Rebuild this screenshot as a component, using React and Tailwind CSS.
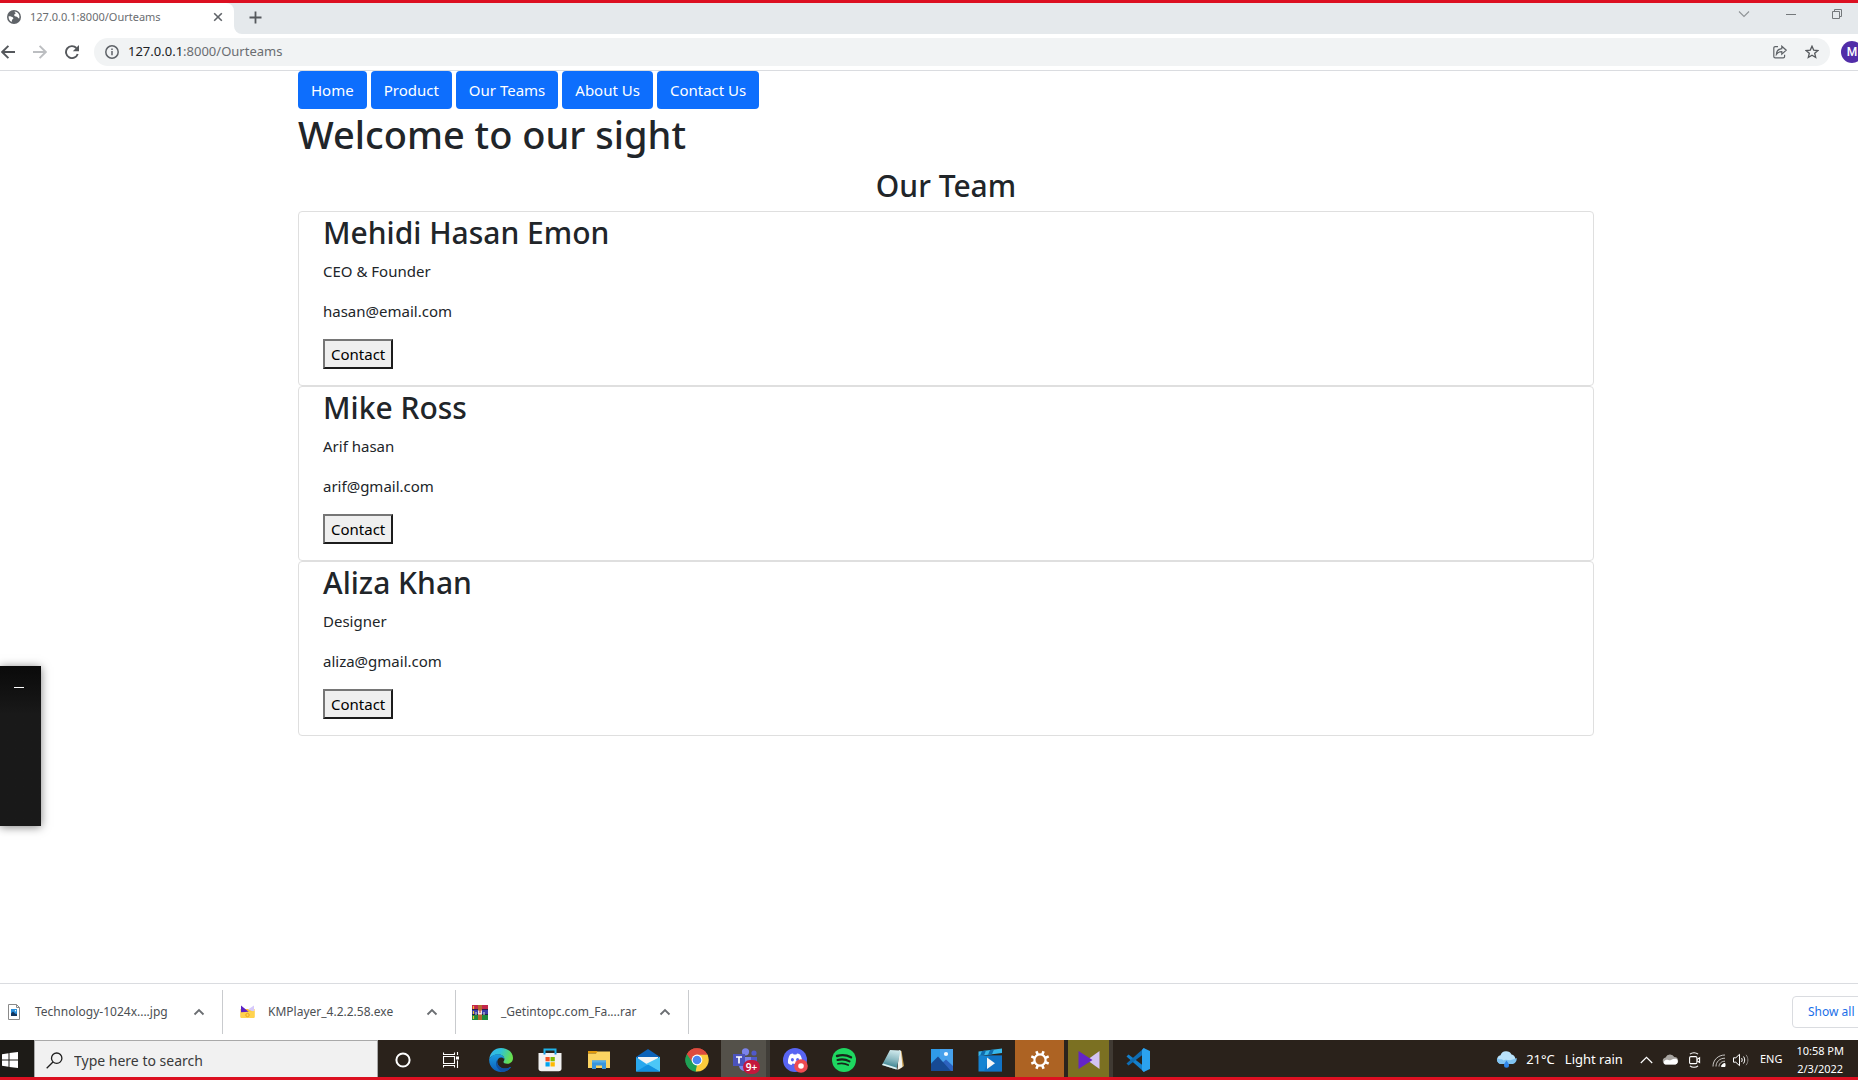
import React from "react";

const NAV = ["Home", "Product", "Our Teams", "About Us", "Contact Us"];

const TEAM = [
  { name: "Mehidi Hasan Emon", role: "CEO & Founder", email: "hasan@email.com" },
  { name: "Mike Ross", role: "Arif hasan", email: "arif@gmail.com" },
  { name: "Aliza Khan", role: "Designer", email: "aliza@gmail.com" },
];

function Globe() {
  return (
    <svg width="14" height="14" viewBox="0 0 14 14" className="shrink-0">
      <circle cx="7" cy="7" r="7" fill="#5f6368" />
      <path d="M1.6 6.2C3.2 6 5.2 6.6 6 7.6c.8 1 .2 1.6-.6 1.8-.6.2-.4 1.6-.8 2.6C2.6 11 1.4 8.800 1.600 6.200z" fill="#fff" />
      <path d="M7.600 1.600C9 1.600 11 2.600 11.800 4.200 12.600 5.600 12.500 7.400 12.100 8.600 11 8.300 11 7 9.900 6.700 8.600 6.400 7 6 7.200 4.900 7.400 3.900 8.400 4 8.600 3.300 8.700 2.700 7.200 2.500 7.600 1.600z" fill="#fff" />
    </svg>
  );
}

function Caret() {
  return (
    <svg width="12" height="8" viewBox="0 0 12 8" fill="none" stroke="#6b6e72" strokeWidth="1.8">
      <path d="M1.500 6.500 6 2l4.500 4.500" />
    </svg>
  );
}

function TabStrip() {
  return (
    <div className="flex h-[31px] bg-[#e5e9ec]">
      <div className="flex w-[234px] shrink-0 items-center rounded-tr-lg bg-white pb-[3px] pl-[7px] pr-[11px]">
        <Globe />
        <span className="ml-[9px] flex-1 text-[11px] text-[#6a6d71]">127.0.0.1:8000/Ourteams</span>
        <button aria-label="Close tab" className="flex">
          <svg width="10" height="10" viewBox="0 0 10 10" stroke="#5f6368" strokeWidth="1.6">
            <path d="M1.200 1.200l7.600 7.600M8.800 1.200 1.200 8.800" />
          </svg>
        </button>
      </div>
      <svg width="8" height="8" viewBox="0 0 8 8" className="self-end" fill="#fff">
        <path d="M0 0a8 8 0 0 0 8 8H0z" />
      </svg>
      <button aria-label="New tab" className="ml-[7px] flex items-center self-stretch pb-[3px]">
        <svg width="13" height="13" viewBox="0 0 13 13" stroke="#55585c" strokeWidth="1.800">
          <path d="M6.500 0.500v12M0.500 6.500h12" />
        </svg>
      </button>
      <div className="ml-auto flex items-start gap-[36px] pr-4 pt-[6px]">
        <button aria-label="Search tabs" className="flex">
          <svg width="12" height="10" viewBox="0 0 12 10" fill="none" stroke="#8f9396" strokeWidth="1.100">
            <path d="M1 2.500l5 5 5-5" />
          </svg>
        </button>
        <button aria-label="Minimize" className="flex">
          <svg width="10" height="10" viewBox="0 0 10 10" stroke="#74787b" strokeWidth="1">
            <path d="M0 5.500h10" />
          </svg>
        </button>
        <button aria-label="Restore" className="flex">
          <svg width="10" height="10" viewBox="0 0 10 10" fill="none" stroke="#74787b" strokeWidth="1">
            <path d="M0.500 2.500h7v7h-7zM2.500 2.500v-2h7v7h-2" />
          </svg>
        </button>
      </div>
    </div>
  );
}

function Toolbar() {
  return (
    <div className="flex h-[37px] items-center overflow-hidden border-b border-[#dadce0] bg-white">
      <button aria-label="Back" className="ml-px flex">
        <svg width="14" height="14" viewBox="0 0 14 14" fill="none" stroke="#55585c" strokeWidth="1.900">
          <path d="M14 7H1.500M7.400 0.800 1.200 7l6.200 6.200" />
        </svg>
      </button>
      <button aria-label="Forward" className="ml-[18px] flex">
        <svg width="14" height="14" viewBox="0 0 14 14" fill="none" stroke="#bcbec1" strokeWidth="1.900">
          <path d="M0 7h12.500M6.600 0.800 12.800 7l-6.200 6.200" />
        </svg>
      </button>
      <button aria-label="Reload" className="ml-[18px] flex">
        <svg width="14" height="14" viewBox="0 0 14 14">
          <path d="M12.700 9A6 6 0 1 1 11.400 3" fill="none" stroke="#55585c" strokeWidth="1.900" />
          <path d="M14 0v6.200H7.800z" fill="#55585c" />
        </svg>
      </button>
      <div className="ml-[15px] flex h-7 flex-1 items-center rounded-full bg-[#f1f3f4] pl-[11px] pr-[11px]">
        <svg width="14" height="14" viewBox="0 0 14 14" fill="none" stroke="#5f6368" strokeWidth="1.500">
          <circle cx="7" cy="7" r="6.200" />
          <path d="M7 6v4.300M7 3.400v1.500" />
        </svg>
        <div className="ml-[9px] flex-1 text-[13px] text-[#6a6d71]">
          <span className="text-[#202124]">127.0.0.1</span>:8000/Ourteams
        </div>
        <button aria-label="Share" className="flex">
          <svg width="14" height="14" viewBox="0 0 14 14" fill="none" stroke="#5f6368" strokeWidth="1.200">
            <path d="M5 1.600H2.200c-.8 0-1.400.6-1.400 1.400v8.400c0 .8.600 1.400 1.400 1.400h8c.8 0 1.400-.6 1.400-1.400V9.800" />
            <path d="M3.400 9.400C3.600 6.200 5.400 4 8.800 3.600V1.200l4.400 4-4.400 3.900V6.600C6.400 6.600 4.600 7.600 3.400 9.400z" />
          </svg>
        </button>
        <button aria-label="Bookmark" className="ml-[18px] flex">
          <svg width="14" height="14" viewBox="0 0 14 14" fill="none" stroke="#55585c" strokeWidth="1.300">
            <path d="M7 1.200l1.700 3.900 4.200.4-3.200 2.800 1 4.200L7 10.300l-3.700 2.200 1-4.200L1.100 5.500l4.200-.4z" />
          </svg>
        </button>
      </div>
      <div className="w-[28px] shrink-0 overflow-hidden pl-[11px]">
        <button className="flex h-[22px] w-[22px] items-center justify-center rounded-full bg-[#512da8] font-[Roboto] text-[12px] font-medium text-white">
          M
        </button>
      </div>
    </div>
  );
}

function Page() {
  return (
    <main className="flex-1 bg-white pl-[34px] text-[15px] text-[#212529]">
      <div className="mx-auto w-full max-w-[1320px] px-3">
        <nav className="flex gap-1">
          {NAV.map((label) => (
            <a key={label} href="#" className="rounded bg-[#0d6efd] px-[13px] py-[7px] leading-6 text-white">
              {label}
            </a>
          ))}
        </nav>
        <h1 className="mb-[6px] text-[38px] font-medium leading-[50px]">Welcome to our sight</h1>
        <h2 className="mb-1 text-center text-[30px] font-medium leading-[42px]">Our Team</h2>
        {TEAM.map((m) => (
          <section key={m.name} className="rounded border border-[#dfdfdf] px-6 pb-4">
            <h2 className="mb-[5px] text-[30px] font-medium leading-[42px]">{m.name}</h2>
            <p className="mb-4 leading-6">{m.role}</p>
            <p className="mb-4 leading-6">{m.email}</p>
            <button className="block border-2 border-b-[#1c1c1c] border-l-[#767676] border-r-[#1c1c1c] border-t-[#767676] bg-[#efefef] px-[6px] py-px leading-6 text-black">
              Contact
            </button>
          </section>
        ))}
      </div>
    </main>
  );
}

function JpgIcon() {
  return (
    <svg width="14" height="16" viewBox="0 0 14 16">
      <path d="M1.500 0.500h8l3 3v12h-11z" fill="#fff" stroke="#8a8a8a" />
      <path d="M9.500 0.500v3h3" fill="none" stroke="#8a8a8a" />
      <path d="M4 5h6v7H4z" fill="#2a8fdb" />
      <path d="M4 12V9.500L6 7.500l2.500 2.500 .5-.5L10 10.500V12z" fill="#12355f" />
      <circle cx="8.500" cy="6.800" r="0.700" fill="#fff" />
    </svg>
  );
}

function KmIcon() {
  return (
    <svg width="15" height="14" viewBox="0 0 15 14">
      <path d="M0.500 4h14v7.500c0 1-.5 1.500-1.500 1.500H2c-1 0-1.500-.5-1.500-1.500z" fill="#fbc531" />
      <path d="M1 0.500v7h8.500z" fill="#5b21c4" />
      <path d="M14 0.500v6.500l-6-2.500z" fill="#d6c9fa" />
      <path d="M0.500 7.500 14.500 6v5.500c0 1-.5 1.500-1.500 1.500H2c-1 0-1.500-.5-1.500-1.500z" fill="#ffd34f" />
      <circle cx="7.500" cy="10" r="1.700" fill="none" stroke="#eda51f" />
    </svg>
  );
}

function RarIcon() {
  return (
    <svg width="16" height="15" viewBox="0 0 16 15">
      <path d="M0 0h16v5H0z" fill="#c2274b" />
      <path d="M0 5h16v5H0z" fill="#3b3fa8" />
      <path d="M0 10h16v5H0z" fill="#1f8a3b" />
      <path d="M0 4.500h16M0 9.500h16" stroke="#26204a" />
      <path d="M1.500 1v3M1.500 6v3M1.500 11v3" stroke="#f4c22c" strokeWidth="1.200" />
      <path d="M6 0h4v15H6z" fill="#b4672f" />
      <path d="M6 5.500h4v4H6z" fill="#f2e6df" />
      <path d="M8 5v3" stroke="#b22" />
      <path d="M4 7v3M12 7v3" stroke="#ddd" />
    </svg>
  );
}

const DOWNLOADS = [
  { Icon: JpgIcon, name: "Technology-1024x....jpg" },
  { Icon: KmIcon, name: "KMPlayer_4.2.2.58.exe" },
  { Icon: RarIcon, name: "_Getintopc.com_Fa....rar" },
];

function DownloadBar() {
  return (
    <div className="flex h-[57px] items-center overflow-hidden border-t border-[#dadce0] bg-white text-[12px] text-[#4c4f53]">
      <div className="-ml-[10px] flex">
        {DOWNLOADS.map(({ Icon, name }) => (
          <div key={name} className="flex h-11 w-[233px] items-center border-r border-[#c9cbce] pl-4 pr-[17px]">
            <span className="flex w-4 justify-center">
              <Icon />
            </span>
            <span className="ml-[13px] flex-1">{name}</span>
            <button aria-label={"Options for " + name} className="flex">
              <Caret />
            </button>
          </div>
        ))}
      </div>
      <div className="ml-auto w-[66px] overflow-hidden">
        <button className="h-8 w-20 rounded border border-[#dadce0] pl-[15px] text-left text-[#1a6fe8]">Show all</button>
      </div>
    </div>
  );
}

const APPS = [
  {
    name: "Cortana",
    icon: (
      <svg width="16" height="16" viewBox="0 0 16 16">
        <circle cx="8" cy="8" r="6.600" fill="none" stroke="#fff" strokeWidth="2" />
      </svg>
    ),
  },
  {
    name: "Task View",
    icon: (
      <svg width="17" height="16" viewBox="0 0 17 16" fill="none" stroke="#fff" strokeWidth="1.100">
        <path d="M0.500 4.500h11v7H0.500zM0.500 0.500v2h11v-2M0.500 15.500v-2h11v2M14.500 0v3M14.500 8.500V16" />
        <path d="M13 4.500h3v3h-3z" fill="#fff" stroke="none" />
      </svg>
    ),
  },
  {
    name: "Edge",
    icon: (
      <svg width="24" height="24" viewBox="0 0 24 24">
        <defs>
          <linearGradient id="edgeA" x1="0" y1="0" x2="1" y2="0.300">
            <stop offset="0" stopColor="#35b6f1" />
            <stop offset="0.500" stopColor="#2fc2d8" />
            <stop offset="1" stopColor="#66e04f" />
          </linearGradient>
          <linearGradient id="edgeB" x1="0" y1="0" x2="0" y2="1">
            <stop offset="0" stopColor="#1b9de2" />
            <stop offset="1" stopColor="#0d5db8" />
          </linearGradient>
        </defs>
        <path d="M0.300 11C1 4.500 5.800 0 12 0c6.800 0 12 4.500 12 10 0 3.500-2.600 5.800-5.800 5.800-2.400 0-3.800-.9-3.800-1.700 0-.7 1-1.200 1-3 0-2.600-2.600-4.600-6.200-4.600C5 6.500 1.800 8.200.3 11z" fill="url(#edgeA)" />
        <path d="M0.200 11C1.800 8 5 6.300 9 6.300c3.800 0 6.400 2.200 6.400 4.700-.8-1-2-1.600-3.200-1.600-2.400 0-4 2-4 4.300 0 3.600 3.400 6.800 7.600 6.800 2.200 0 4-.6 5.600-1.500.4-.2.700.2.400.6C19.600 22.400 16 24 12 24 5.300 24-.4 18.500.2 11z" fill="url(#edgeB)" />
        <path d="M8.500 11.500c-1.500 5.200 2.300 9.300 7.600 9 2 0 3.700-.6 5.300-1.500.4-.2.700.2.400.6-2 2.800-5.200 4.300-8.600 4.400-5.500-2.500-8-8.500-4.700-12.500z" fill="#0f4fa3" />
      </svg>
    ),
  },
  {
    name: "Microsoft Store",
    icon: (
      <svg width="24" height="24" viewBox="0 0 24 24">
        <path d="M6.500 6V1.500h11V6" fill="none" stroke="#1fb3ea" strokeWidth="2" />
        <path d="M0.500 5h23v15.500c0 1.700-1 2.800-2.800 2.800H3.300c-1.800 0-2.800-1.100-2.800-2.800z" fill="#f2f2f2" />
        <path d="M5.500 5h2v1.500h-2zM16.500 5h2v1.500h-2z" fill="#1490df" />
        <path d="M7.500 9h4.200v4.300H7.500z" fill="#f25022" />
        <path d="M12.500 9h4.300v4.300h-4.300z" fill="#7fba00" />
        <path d="M7.500 14.200h4.200v4.300H7.500z" fill="#00a4ef" />
        <path d="M12.500 14.200h4.300v4.300h-4.300z" fill="#ffb900" />
      </svg>
    ),
  },
  {
    name: "File Explorer",
    icon: (
      <svg width="22" height="20" viewBox="0 0 22 20">
        <path d="M0 1h9l2 2.500H0z" fill="#e29a0c" />
        <path d="M9.500 1.500H22V18H0V3.500h8z" fill="#fcd462" />
        <path d="M4 19V10.500h14V19h-4v-3.500H8V19z" fill="#3a96dd" />
        <path d="M4 10.500h14v2H4z" fill="#56aee8" />
      </svg>
    ),
  },
  {
    name: "Mail",
    icon: (
      <svg width="24" height="23" viewBox="0 0 24 23">
        <path d="M0 8 12 0l12 8v4H0z" fill="#0c62b8" />
        <path d="M2 8h20v8H2z" fill="#f4f4f4" />
        <path d="M0 8l12 8 12-8v14.500H0z" fill="#2aa9ee" />
        <path d="M24 8v14.500L10 15z" fill="#4cc7f7" />
        <path d="M0 22.500 12 15.500l12 7z" fill="#1390df" />
      </svg>
    ),
  },
  {
    name: "Chrome",
    icon: (
      <svg width="24" height="24" viewBox="0 0 24 24">
        <path d="M12 12 1.900 6.200A11.600 11.600 0 0 1 22.100 6.200z" fill="#dd4b3e" />
        <path d="M12 12 22.100 6.200A11.600 11.600 0 0 1 12 23.600z" fill="#fccb3b" />
        <path d="M12 12v11.600A11.600 11.600 0 0 1 1.900 6.200z" fill="#1fa055" />
        <path d="M12 6.600h10.300l.6 1.700L16.600 14.800 12 23.600l-1.400-.1z" fill="#fccb3b" />
        <path d="M1.900 6.200 7.400 14.700 12 17.300l-1.500 6.200C4 22.500.5 17 .5 12c0-2 .5-4 1.400-5.800z" fill="#1fa055" />
        <path d="M1.900 6.200 6.900 13.500 7 9l5-2.400h10.300A11.600 11.600 0 0 0 1.900 6.200z" fill="#dd4b3e" />
        <circle cx="12" cy="12" r="5.400" fill="#fff" />
        <circle cx="12" cy="12" r="4.300" fill="#4a86f0" />
      </svg>
    ),
  },
  {
    name: "Teams",
    cell: "bg-[#54514a] border-r-4 border-[#403d38] pl-1",
    icon: (
      <span className="relative block">
        <svg width="25" height="24" viewBox="0 0 25 24">
          <circle cx="12.500" cy="3.800" r="3.600" fill="#7b83eb" />
          <circle cx="21" cy="5" r="2.600" fill="#5059c9" />
          <path d="M16 9h8v7c0 3-2 4-4 4z" fill="#5059c9" />
          <path d="M6 9h12v8c0 4-3 6-6 6s-6-2-6-6z" fill="#7b83eb" />
          <path d="M0 6h12v12H0z" fill="#4b53bc" />
          <path d="M3 9h6M6 9v6.500" stroke="#fff" strokeWidth="1.700" />
        </svg>
        <span className="absolute -bottom-[2px] -right-[2px] flex h-[14px] w-[17px] items-center justify-center rounded-full bg-[#c4173c] text-[10px] font-semibold leading-none text-white">
          9+
        </span>
      </span>
    ),
  },
  {
    name: "Discord",
    icon: (
      <svg width="26" height="26" viewBox="0 0 26 26">
        <circle cx="13" cy="13" r="12" fill="#5865f2" />
        <path d="M8 7.600c1-.6 2-.8 3-1l.6 1c1-.1 1.900-.1 2.800 0l.6-1c1 .2 2 .4 3 1 1.700 2.600 2.300 5.400 2 8.600-1.200 1-2.400 1.500-3.600 1.800l-.9-1.400c-1.600.4-3.400.4-5 0L9.600 18c-1.200-.3-2.400-.8-3.600-1.800-.3-3 .4-6 2-8.600z" fill="#fff" />
        <ellipse cx="10.400" cy="12.800" rx="1.500" ry="1.700" fill="#5865f2" />
        <ellipse cx="15.600" cy="12.800" rx="1.500" ry="1.700" fill="#5865f2" />
        <circle cx="19" cy="19" r="6.800" fill="#ee4b52" />
        <circle cx="19" cy="19" r="2.800" fill="#fff" />
      </svg>
    ),
  },
  {
    name: "Spotify",
    icon: (
      <svg width="24" height="24" viewBox="0 0 24 24" fill="none" stroke="#17251b" strokeLinecap="round">
        <circle cx="12" cy="12" r="12" fill="#1ed760" stroke="none" />
        <path d="M5 8c4.500-1.300 10-.9 14 1.300" strokeWidth="2.400" />
        <path d="M5.500 12c4-1.100 8.500-.6 12 1.300" strokeWidth="2.100" />
        <path d="M6 15.800c3.500-.9 7-.5 10.200 1.200" strokeWidth="1.700" />
      </svg>
    ),
  },
  {
    name: "Notepad",
    icon: (
      <svg width="24" height="24" viewBox="0 0 24 24">
        <defs>
          <linearGradient id="pad" x1="0.600" y1="0" x2="0.400" y2="1">
            <stop offset="0" stopColor="#cfe9ec" />
            <stop offset="0.450" stopColor="#8fbcc4" />
            <stop offset="0.850" stopColor="#3f8694" />
            <stop offset="1" stopColor="#a8d3d9" />
          </linearGradient>
        </defs>
        <path d="M18 2.500 20.500 3 23 18l-5 3.500z" fill="#c49a4c" />
        <path d="M18 2 20 3l1.500 16-5 3z" fill="#f1f1ec" />
        <path d="M9 2 19.500 2.500 15.500 21.500 1 17z" fill="url(#pad)" />
        <path d="M1 17l14.500 4.500.4-1.700L2 15.500z" fill="#dff1f2" />
      </svg>
    ),
  },
  {
    name: "Photos",
    icon: (
      <svg width="22" height="22" viewBox="0 0 22 22">
        <path d="M0 0h22v22H0z" fill="#2f9be8" />
        <path d="M9 0h13v22H9z" fill="#5fa8f0" opacity="0.500" />
        <circle cx="15" cy="5" r="2.100" fill="#f5fbff" />
        <path d="M11 14l4-3.500L22 17v5H13z" fill="#2c62bf" />
        <path d="M0 14.500 7 7.500 20 22H0z" fill="#174a94" />
      </svg>
    ),
  },
  {
    name: "Movies & TV",
    icon: (
      <svg width="25" height="24" viewBox="0 0 25 24">
        <path d="M0.500 3.500 24 0.500V5L0.500 8z" fill="#38b7ea" />
        <path d="M4 3l4-.5-2 5-4 .3zM12 2l4-.5-2 4.700-4 .5z" fill="#0f6cae" />
        <path d="M0.500 7.500H24v16H0.500z" fill="#1583d2" />
        <path d="M12 7.500h12v16H6z" fill="#0d63b8" opacity="0.500" />
        <path d="M9 9.500v11.500l8-5.700z" fill="#f6f6f6" />
      </svg>
    ),
  },
  {
    name: "Settings",
    cell: "bg-[#ad6323]",
    icon: (
      <svg width="20" height="20" viewBox="-10 -10 20 20" fill="none" stroke="#fff">
        <circle r="5.600" strokeWidth="2.200" />
        <path d="M2.300-5.600l1.300-3.100M-2.300-5.600l-1.300-3.100M2.300 5.600l1.300 3.100M-2.300 5.600l-1.300 3.100M5.600-2.300l3.100-1.300M5.600 2.300l3.100 1.300M-5.600-2.300l-3.100-1.300M-5.600 2.300l-3.100 1.300" strokeWidth="2.600" />
      </svg>
    ),
  },
  {
    name: "KMPlayer",
    cell: "bg-[#7b7022] border-l-4 border-l-[#2a241d] border-r-4 border-r-[#403a33]",
    icon: (
      <svg width="22" height="20" viewBox="0 0 22 20">
        <path d="M21.500 1v18L9 10z" fill="#d3c3f3" />
        <path d="M0.500 1v18L14.500 10z" fill="#6425c8" />
      </svg>
    ),
  },
  {
    name: "VS Code",
    icon: (
      <svg width="24" height="24" viewBox="0 0 24 24">
        <path d="M0.500 8.500 2.500 6.500 19 19v4.500L17 23z" fill="#1480cc" />
        <path d="M0.500 15.500 2.500 17.500 19 5V0.500L17 1z" fill="#0f6db4" />
        <path d="M17.500 0 24 3v18l-6.500 3-1.500-2V2z" fill="#2ba2ee" />
      </svg>
    ),
  },
];

function Taskbar() {
  return (
    <footer className="flex h-[37px] items-stretch overflow-hidden bg-[#2a221b] text-white">
      <button aria-label="Start" className="flex w-[34px] items-center bg-[#1d1b17] pl-[2px] pt-[3px]">
        <svg width="16" height="16" viewBox="0 0 16 16" fill="#fff">
          <path d="M0 2.200 6.500 1.300v6.200H0zM7.500 1.100 16 0v7.500H7.500zM0 8.500h6.500v6.200L0 13.800zM7.500 8.500H16V16l-8.500-1.100z" />
        </svg>
      </button>
      <label className="flex w-[344px] items-center border border-b-0 border-[#a9a9a9] bg-[#f1f1f1] pl-[11px] pt-[2px]">
        <svg width="17" height="17" viewBox="0 0 17 17" fill="none" stroke="#1f1f1f" strokeWidth="1.300">
          <circle cx="10.700" cy="6.200" r="5.200" />
          <path d="M7 10 0.700 16.300" />
        </svg>
        <input
          aria-label="Search"
          placeholder="Type here to search"
          className="ml-[11px] min-w-0 flex-1 bg-transparent text-[14px] placeholder:text-[#3a3a3a] focus:outline-none"
        />
      </label>
      <div className="flex">
        {APPS.map((a) => (
          <button key={a.name} aria-label={a.name} className={"flex w-[49px] items-center justify-center pt-[3px] " + (a.cell || "")}>
            {a.icon}
          </button>
        ))}
      </div>
      <div className="ml-auto flex items-center pr-[14px] pt-[2px]">
        <svg width="21" height="17" viewBox="0 0 21 17">
          <path d="M5 13a4.500 4.500 0 0 1-.5-8.800A6 6 0 0 1 15.500 3.500a5 5 0 0 1 .7 9.500z" fill="#b9e2fa" />
          <path d="M5 13a4.500 4.500 0 0 1-3.800-6c2 2 5 .5 6.300 2.500 2.500-2 5 .5 7.500-.5s4-1 5.600-2A5 5 0 0 1 16.200 13z" fill="#7fc3f2" />
          <path d="M10.500 9.500c2 2.500 2.500 3.700 2.500 4.800a2.500 2.500 0 0 1-5 0c0-1.100.5-2.300 2.500-4.800z" fill="#2f86ea" />
        </svg>
        <span className="ml-[9px] text-[13px]">21°C</span>
        <span className="ml-[10px] text-[13px]">Light rain</span>
        <svg className="ml-[17px]" width="13" height="8" viewBox="0 0 13 8" fill="none" stroke="#fff" strokeWidth="1.200">
          <path d="M0.800 7 6.500 1.300 12.200 7" />
        </svg>
        <svg className="ml-[9px]" width="17" height="11" viewBox="0 0 17 11">
          <path d="M4 10.500A3.600 3.600 0 0 1 3.600 3.400 4.800 4.800 0 0 1 12.300 3 3.800 3.800 0 0 1 13.200 10.500z" fill="#a7a4a0" />
          <path d="M3 10.500a2.600 2.600 0 0 1 .6-4.600C6 5 7 7 9 6s4-1.700 5.800-.8A3.200 3.200 0 0 1 13.500 10.500z" fill="#fff" />
        </svg>
        <svg className="ml-[9px]" width="13" height="16" viewBox="0 0 13 16" fill="none" stroke="#fff" strokeWidth="1.100">
          <path d="M2 2.200C4 .3 8 .3 10 2.200M2 13.800c2 1.900 6 1.900 8 0" />
          <rect x="1.600" y="4.600" width="7.300" height="7" rx="1.200" />
          <path d="M9 7.500l2.600-1.800v4.800L9 8.700" />
        </svg>
        <svg className="ml-[11px]" width="14" height="14" viewBox="0 0 14 14" fill="none" stroke="#fff" strokeWidth="1">
          <path d="M1 13.500C1 7 6 2 13 2M4 13.500C4 9 7.500 5.200 13 5.200M7 13.500c0-3 2.500-5.300 6-5.300" stroke="#c8c5c2" />
          <path d="M9.500 13.500c0-1.500 1.500-3 3.500-3v3z" fill="#fff" />
        </svg>
        <svg className="ml-[7px]" width="17" height="14" viewBox="0 0 17 14" fill="none" stroke="#fff" strokeWidth="1">
          <path d="M0.500 4.800h2.300L6.500 1.300v11.400L2.800 9.200H0.500zM8.500 5c.9 1.200.9 2.800 0 4M10.500 3.500c1.600 2 1.600 5 0 7" />
          <path d="M13 1.800c2.500 3 2.500 7.400 0 10.400" stroke="#8b8783" />
        </svg>
        <span className="ml-[10px] text-[11px]">ENG</span>
        <div className="ml-[14px] text-center text-[11px] leading-[18px]">
          <div>10:58 PM</div>
          <div>2/3/2022</div>
        </div>
      </div>
    </footer>
  );
}

export default function App() {
  return (
    <div className="relative flex min-h-screen flex-col overflow-hidden border-y-[3px] border-[#dc1021] bg-white font-['Noto_Sans','Open_Sans',sans-serif]">
      <TabStrip />
      <Toolbar />
      <Page />
      <DownloadBar />
      <Taskbar />
      <aside className="absolute bottom-[251px] left-0 flex h-40 w-[41px] justify-end bg-linear-to-b from-[#0a0a0a] to-[#191919] to-30% pr-[17px] pt-[21px] shadow-[0_1px_9px_rgba(0,0,0,0.5)]">
        <button aria-label="Minimize panel" className="h-px w-[10px] bg-white" />
      </aside>
    </div>
  );
}
